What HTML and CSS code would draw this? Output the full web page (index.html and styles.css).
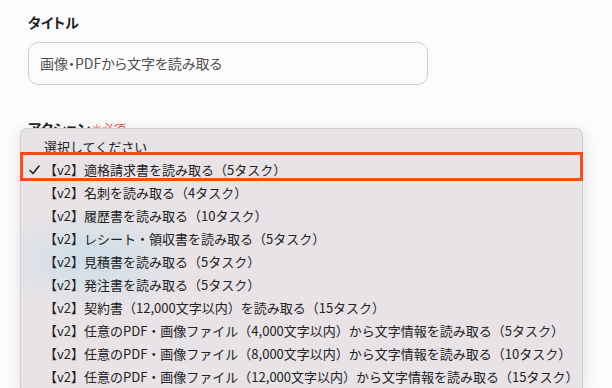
FILE: index.html
```html
<!DOCTYPE html>
<html>
<head>
	<meta charset="UTF-8">
	<title>画像・PDFから文字を読み取る</title>
	<link rel="stylesheet" href="styles.css">
</head>
<body>
	<div class="form">
		<div class="field">
			<label class="label">タイトル</label>
			<div class="input">画像・PDFから文字を読み取る</div>
		</div>
		<div class="field">
			<label class="label">アクション<span class="req">＊必須</span></label>
		</div>
	</div>
	<div class="menu">
		<div class="item">選択してください</div>
		<div class="item checked">
			<svg class="check" width="11" height="10" viewBox="0 0 11 10"><path d="M1 5.5 L4 8.5 L10 1" fill="none" stroke="#222" stroke-width="1.6" stroke-linecap="round" stroke-linejoin="round"/></svg>
			【v2】適格請求書を読み取る（5タスク）
		</div>
		<div class="item">【v2】名刺を読み取る（4タスク）</div>
		<div class="item">【v2】履歴書を読み取る（10タスク）</div>
		<div class="item">【v2】レシート・領収書を読み取る（5タスク）</div>
		<div class="item">【v2】見積書を読み取る（5タスク）</div>
		<div class="item">【v2】発注書を読み取る（5タスク）</div>
		<div class="item">【v2】契約書（12,000文字以内）を読み取る（15タスク）</div>
		<div class="item">【v2】任意のPDF・画像ファイル（4,000文字以内）から文字情報を読み取る（5タスク）</div>
		<div class="item">【v2】任意のPDF・画像ファイル（8,000文字以内）から文字情報を読み取る（10タスク）</div>
		<div class="item">【v2】任意のPDF・画像ファイル（12,000文字以内）から文字情報を読み取る（15タスク）</div>
	</div>
	<div class="highlight"></div>
</body>
</html>
```

FILE: styles.css
```css
*{
	margin: 0;
	padding: 0;
	box-sizing: border-box;
}
body{
	background: #fdfcfd;
	font-family: "Noto Sans CJK JP", "Noto Sans", sans-serif;
	color: #222;
	overflow: hidden;
	height: 388px;
}
.form{
	display: flex;
	flex-direction: column;
	gap: 34px;
	padding: 13px 28px 0;
	width: 456px;
}
.field{
	display: flex;
	flex-direction: column;
	gap: 10px;
}
.label{
	font-size: 14px;
	font-weight: bold;
	line-height: 19px;
	color: #222;
	font-feature-settings: "palt";
}
.req{
	color: #f0493e;
	font-weight: normal;
	font-size: 12px;
	margin-left: 2px;
}
.input{
	height: 43px;
	border: 1px solid #cfcdd8;
	border-radius: 10px;
	padding: 0 11px;
	font-size: 14px;
	line-height: 41px;
	color: #505050;
	font-feature-settings: "palt";
}
/* ポップアップメニュー */
.menu{
	position: absolute;
	top: 128px;
	left: 20px;
	width: 563px;
	height: 260px;
	overflow: hidden;
	background:
		radial-gradient(ellipse 90px 50px at 70px 130px, rgba(196,220,232,.75), rgba(196,220,232,0)),
		#e7e3e7;
	border: 1px solid #d2ced3;
	border-bottom: none;
	border-radius: 7px 7px 0 0;
	box-shadow: 0 4px 16px rgba(0,0,0,.12);
	padding-top: 6px;
}
.item{
	position: relative;
	height: 23px;
	line-height: 23px;
	padding-left: 23px;
	font-size: 13px;
	color: #222;
	white-space: nowrap;
}
.check{
	position: absolute;
	left: 8px;
	top: 7px;
}
.highlight{
	position: absolute;
	top: 152px;
	left: 20px;
	width: 563px;
	height: 29px;
	border: 3px solid #ff4a1a;
}
```
